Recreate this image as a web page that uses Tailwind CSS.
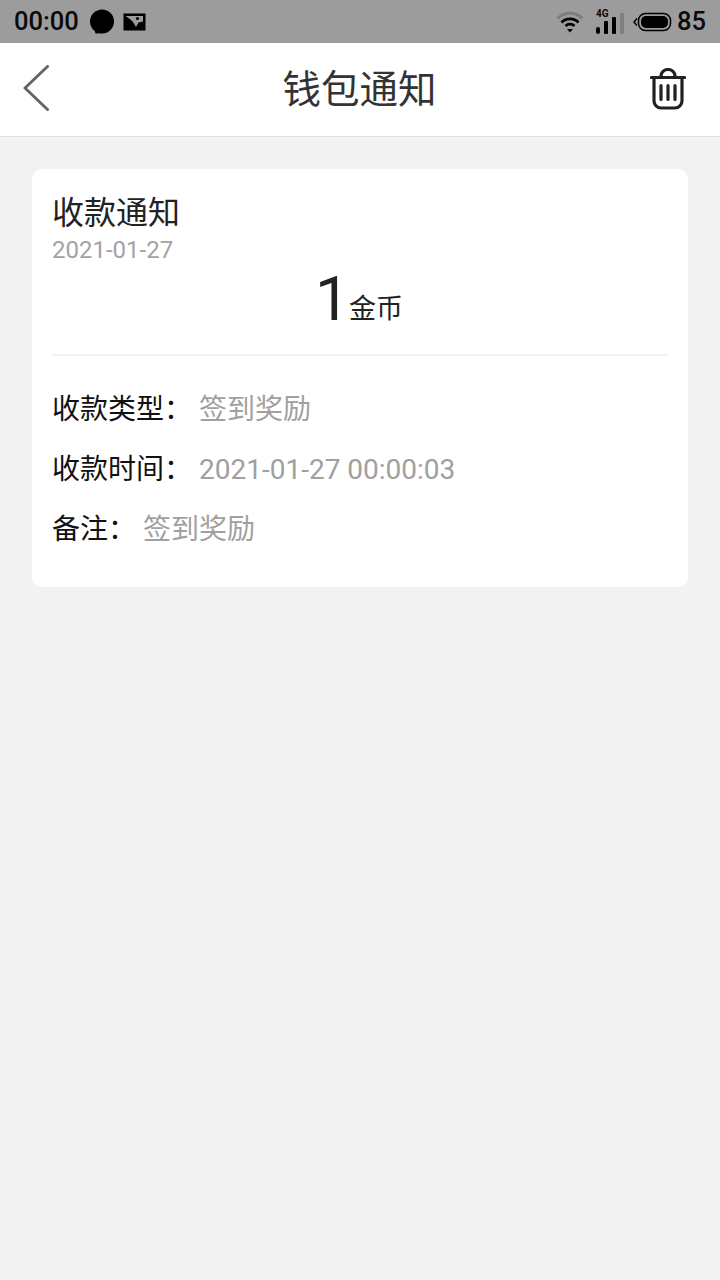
<!DOCTYPE html>
<html lang="zh-CN">
<head>
  <meta charset="UTF-8" />
  <meta name="viewport" content="width=device-width, initial-scale=1.0" />
  <title>钱包通知</title>
  <script src="https://cdn.jsdelivr.net/npm/@tailwindcss/browser@4"></script>
</head>
<body class="bg-[#f2f2f2] font-['Roboto','Noto_Sans_CJK_SC',sans-serif]">
<div class="w-[720px] h-[1280px] flex flex-col overflow-hidden">

  <!-- Status bar -->
  <div class="h-[43px] bg-[#9c9c9c] flex items-center justify-between pl-[14px] pr-[14px] text-[#0a0a0a]">
    <div class="flex items-center">
      <span class="text-[25.5px] leading-none font-medium">00:00</span>
      <svg class="ml-[10px]" width="26" height="26" viewBox="0 0 26 26"><circle cx="13" cy="12.500" r="12" fill="#000"/><path d="M5 19l1.500 5.500 8-.500z" fill="#000"/></svg>
      <svg class="ml-[8px]" width="23" height="18" viewBox="0 0 23 18"><rect x="0.500" y="0.500" width="22" height="17" fill="#000"/><path d="M2.500 3H20V8.500L15.500 9.500 13 14 10 9 7.500 6.500z" fill="#9c9c9c"/><circle cx="14.500" cy="5.500" r="1.600" fill="#000"/></svg>
    </div>
    <div class="flex items-center">
      <svg width="28" height="24" viewBox="0 0 28 24" fill="none"><path d="M1.500 8.500a17.500 17.500 0 0 1 25 0" stroke="#7d7d7d" stroke-width="2.800"/><path d="M5.500 12.500a12 12 0 0 1 17 0" stroke="#000" stroke-width="2.800"/><path d="M9.500 16a6.500 6.500 0 0 1 9 0" stroke="#000" stroke-width="2.800"/><path d="M11 19h6l-3 3.500z" fill="#000"/></svg>
      <div class="ml-[12px] relative w-[28px] h-[24px]">
        <span class="absolute left-0 top-[-2px] text-[10px] leading-[12px] font-bold">4G</span>
        <div class="absolute bottom-0 left-0 flex items-end gap-[4px]">
          <div class="w-[4px] h-[7px] bg-black rounded-[2px]"></div>
          <div class="w-[4px] h-[13px] bg-black rounded-[1px]"></div>
          <div class="w-[4px] h-[17px] bg-black rounded-[1px]"></div>
          <div class="w-[4px] h-[21px] bg-[#808080] rounded-[1px]"></div>
        </div>
      </div>
      <svg class="ml-[8px]" width="40" height="22" viewBox="0 0 40 22" fill="none"><path d="M5 7.500 2 11l3 3.500" stroke="#000" stroke-width="1.500"/><rect x="6.500" y="2.500" width="32" height="17" rx="7" stroke="#000" stroke-width="1.500"/><rect x="9" y="5" width="27" height="12" rx="5" fill="#000"/></svg>
      <span class="ml-[5px] text-[25.5px] leading-none font-medium">85</span>
    </div>
  </div>

  <!-- Header -->
  <header class="h-[94px] bg-white border-b border-[#dfdfdf] flex items-center justify-between pl-[23px] pr-[34px] relative">
    <svg class="-mt-[3px]" width="26" height="46" viewBox="0 0 26 46" fill="none"><path d="M24.500 1.500 2 23l22.500 21.500" stroke="#666" stroke-width="3" stroke-linecap="round" stroke-linejoin="round"/></svg>
    <h1 class="absolute left-0 right-0 text-center text-[38.500px] leading-none font-normal text-[#333] -ml-[1px] mt-[1px]">钱包通知</h1>
    <svg class="-mt-[2px]" width="36" height="42" viewBox="0 0 36 42" fill="none" stroke="#222" stroke-width="3.200" stroke-linecap="round" stroke-linejoin="round"><path d="M1.500 9.500h33"/><path d="M11 9V8a7 6.500 0 0 1 14 0v1"/><path d="M4 10v23a7 7 0 0 0 7 7h14a7 7 0 0 0 7-7V10"/><path d="M11 17.500v14M18 17.500v14M25 17.500v14"/></svg>
  </header>

  <!-- Card -->
  <main class="px-[32px] pt-[32px]">
    <section class="bg-white rounded-[10px] h-[418px] px-[20px] pt-[24px]">
      <h2 class="text-[32px] leading-[40px] font-normal text-[#222]">收款通知</h2>
      <p class="text-[24px] leading-[28px] text-[#a3a3a3] mt-[3px]">2021-01-27</p>
      <div class="flex items-end justify-center mt-[6px] h-[58px] pr-[2px]">
        <span class="text-[62px] leading-[58px] text-[#222]">1</span>
        <span class="text-[27px] leading-[30px] text-[#222] -ml-[1px] mb-[4px]">金币</span>
      </div>
      <div class="h-[2px] bg-[#f2f2f2] mt-[26px]"></div>
      <div class="mt-[38px] flex flex-col gap-[28px] text-[28px] leading-[32px] text-[#111]">
        <div class="flex"><span class="w-[147px]">收款类型：</span><span class="text-[#a0a0a0]">签到奖励</span></div>
        <div class="flex"><span class="w-[147px]">收款时间：</span><span class="text-[#a0a0a0]">2021-01-27 00:00:03</span></div>
        <div class="flex"><span class="w-[91px]">备注：</span><span class="text-[#a0a0a0]">签到奖励</span></div>
      </div>
    </section>
  </main>
</div>
</body>
</html>
